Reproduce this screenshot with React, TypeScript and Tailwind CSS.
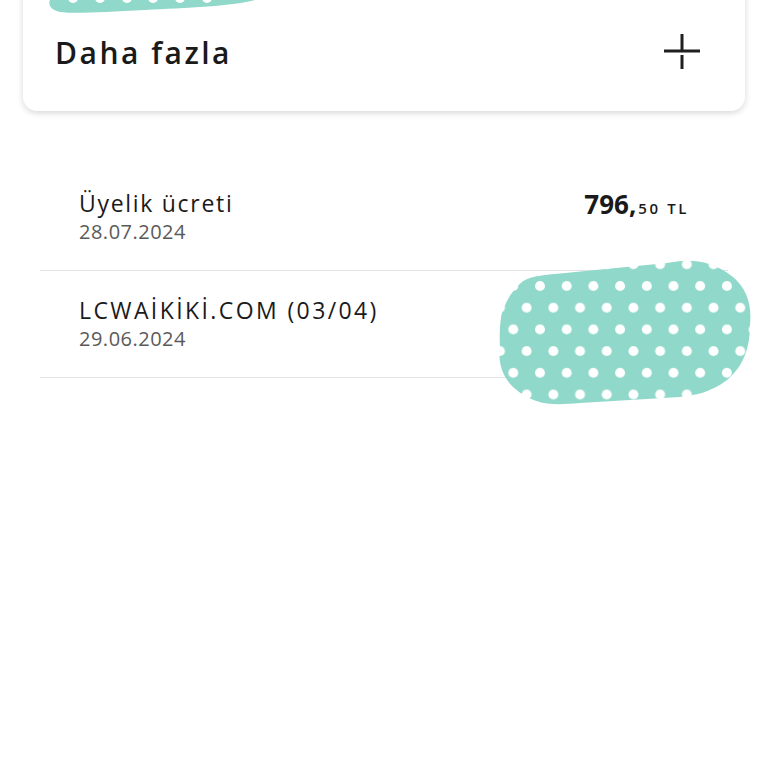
import React from 'react';

const TEAL = '#90d8ca';

function TopScribble() {
    const dots = [28, 55, 82, 108, 135, 162];
    return (
        <svg className="absolute left-[45px] top-0" width="215" height="16" viewBox="0 0 215 16">
            <path d="M 0 0 L 210 0 C 190 6 140 8 100 10 C 60 12 30 14 15 12 C 5 10 3 4 5 0 Z" fill={TEAL} />
            {dots.map((x) => (
                <circle key={x} cx={x} cy={-2} r={5} fill="#fff" />
            ))}
        </svg>
    );
}

function DotScribble() {
    return (
        <svg className="absolute left-[495px] top-[255px]" width="262" height="155" viewBox="0 0 262 155">
            <defs>
                <pattern id="dots" x="18.3" y="31" width="26.7" height="43.4" patternUnits="userSpaceOnUse">
                    <rect width="26.7" height="43.4" fill={TEAL} />
                    <circle cx="0" cy="0" r="5" fill="#fff" />
                    <circle cx="26.7" cy="0" r="5" fill="#fff" />
                    <circle cx="0" cy="43.4" r="5" fill="#fff" />
                    <circle cx="26.7" cy="43.4" r="5" fill="#fff" />
                    <circle cx="13.35" cy="21.7" r="5" fill="#fff" />
                </pattern>
            </defs>
            <path
                d="M 22 32 C 30 22 40 21 60 19 L 172 8 C 190 4 215 3 238 22 C 252 34 257 50 255 70 C 255 90 250 110 232 125 C 215 138 200 140 185 142 L 85 148 C 60 150 40 152 18 132 C 6 120 3 105 5 92 C 4 75 6 58 8 55 C 12 45 16 38 22 32 Z"
                fill="url(#dots)"
            />
        </svg>
    );
}

function PlusIcon() {
    return (
        <svg width="36" height="36" viewBox="0 0 36 36" fill="none" stroke="#1f1f1f" strokeWidth="3">
            <path d="M18 0 V17" />
            <path d="M0 17 H36" />
            <path d="M18 21 V35" />
        </svg>
    );
}

interface Tx {
    title: string;
    titleClass: string;
    date: string;
    amount?: [string, string];
}

// caps row needs more spacing to match the wide original typeface
const transactions: Tx[] = [
    { title: 'Üyelik ücreti', titleClass: 'tracking-[1.7px]', date: '28.07.2024', amount: ['796,', '50 TL'] },
    { title: 'LCWAİKİKİ.COM (03/04)', titleClass: 'tracking-[2.4px]', date: '29.06.2024' },
];

export default function App() {
    return (
        <div className="relative min-h-screen overflow-hidden bg-white font-['Open_Sans',sans-serif] text-[#1a1a1a]">
            <div className="mx-[23px] -mt-[30px] rounded-[14px] bg-white pt-[30px] pb-[7px] shadow-[0_2px_6px_rgba(0,0,0,0.16)]">
                <div className="flex h-[104px] items-center justify-between pl-[32px] pr-[45px]">
                    <span className="text-[30px] font-semibold tracking-[2.5px]">Daha fazla</span>
                    <PlusIcon />
                </div>
            </div>

            <div className="mx-[40px] mt-[53px]">
                {transactions.map((t) => (
                    <div key={t.title} className="flex items-start justify-between border-b border-[#e2e2e2] px-[39px] pt-[24px] pb-[25px]">
                        <div className="flex flex-col">
                            <span className={`text-[23px] leading-[31px] font-medium ${t.titleClass}`}>{t.title}</span>
                            <span className="text-[20px] leading-[26px] tracking-[0.5px] text-[#5a5a5a]">{t.date}</span>
                        </div>
                        {t.amount && (
                            <div className="-mt-[3px] flex items-baseline">
                                <span className="text-[26px] font-bold">{t.amount[0]}</span>
                                <span className="ml-[2px] text-[15px] font-semibold tracking-[2.6px]">{t.amount[1]}</span>
                            </div>
                        )}
                    </div>
                ))}
            </div>

            <TopScribble />
            <DotScribble />
        </div>
    );
}
